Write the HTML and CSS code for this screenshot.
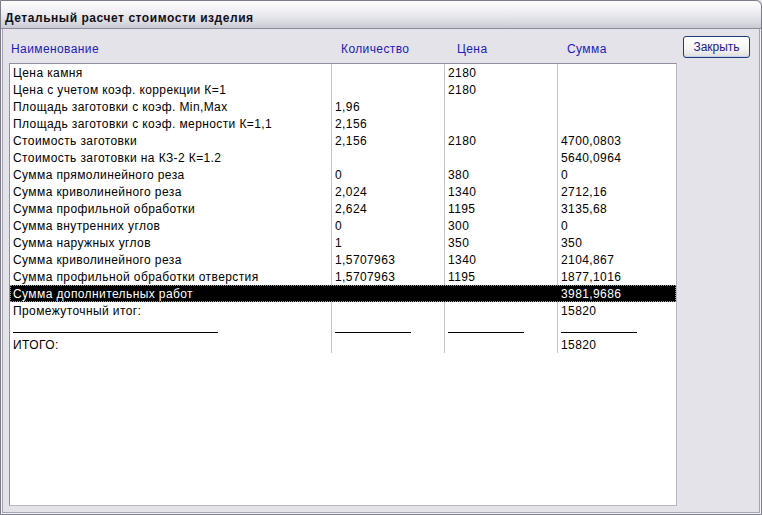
FILE: index.html
```html
<!DOCTYPE html>
<html lang="ru">
<head>
<meta charset="utf-8">
<title>Детальный расчет стоимости изделия</title>
<link rel="stylesheet" href="styles.css">
</head>
<body>
<div class="window">
  <div class="titlebar"><span class="title">Детальный расчет стоимости изделия</span></div>
  <div class="body">
    <div class="main">
      <div class="headers">
        <span class="h h1">Наименование</span>
        <span class="h h2">Количество</span>
        <span class="h h3">Цена</span>
        <span class="h h4">Сумма</span>
      </div>
      <div class="list">
        <div class="grid">
          <div class="row"><span class="c">Цена камня</span><span class="c"></span><span class="c">2180</span><span class="c"></span></div>
          <div class="row"><span class="c">Цена с учетом коэф. коррекции К=1</span><span class="c"></span><span class="c">2180</span><span class="c"></span></div>
          <div class="row"><span class="c">Площадь заготовки с коэф. Min,Max</span><span class="c">1,96</span><span class="c"></span><span class="c"></span></div>
          <div class="row"><span class="c">Площадь заготовки с коэф. мерности К=1,1</span><span class="c">2,156</span><span class="c"></span><span class="c"></span></div>
          <div class="row"><span class="c">Стоимость заготовки</span><span class="c">2,156</span><span class="c">2180</span><span class="c">4700,0803</span></div>
          <div class="row"><span class="c">Стоимость заготовки на КЗ-2 К=1.2</span><span class="c"></span><span class="c"></span><span class="c">5640,0964</span></div>
          <div class="row"><span class="c">Сумма прямолинейного реза</span><span class="c">0</span><span class="c">380</span><span class="c">0</span></div>
          <div class="row"><span class="c">Сумма криволинейного реза</span><span class="c">2,024</span><span class="c">1340</span><span class="c">2712,16</span></div>
          <div class="row"><span class="c">Сумма профильной обработки</span><span class="c">2,624</span><span class="c">1195</span><span class="c">3135,68</span></div>
          <div class="row"><span class="c">Сумма внутренних углов</span><span class="c">0</span><span class="c">300</span><span class="c">0</span></div>
          <div class="row"><span class="c">Сумма наружных углов</span><span class="c">1</span><span class="c">350</span><span class="c">350</span></div>
          <div class="row"><span class="c">Сумма криволинейного реза</span><span class="c">1,5707963</span><span class="c">1340</span><span class="c">2104,867</span></div>
          <div class="row"><span class="c">Сумма профильной обработки отверстия</span><span class="c">1,5707963</span><span class="c">1195</span><span class="c">1877,1016</span></div>
          <div class="row sel"><span class="c">Сумма дополнительных работ</span><span class="c"></span><span class="c"></span><span class="c">3981,9686</span></div>
          <div class="row"><span class="c">Промежуточный итог:</span><span class="c"></span><span class="c"></span><span class="c">15820</span></div>
          <div class="row"><span class="c"><i class="ul ul1"></i></span><span class="c"><i class="ul"></i></span><span class="c"><i class="ul"></i></span><span class="c"><i class="ul"></i></span></div>
          <div class="row"><span class="c">ИТОГО:</span><span class="c"></span><span class="c"></span><span class="c">15820</span></div>
        </div>
      </div>
    </div>
    <div class="side">
      <button class="btn">Закрыть</button>
    </div>
  </div>
</div>
</body>
</html>
```

FILE: styles.css
```css
html, body {
  margin: 0;
  padding: 0;
  background: #e4e3ea;
}
.window {
  width: 762px;
  height: 515px;
  box-sizing: border-box;
  display: flex;
  flex-direction: column;
  border: 1px solid #7c7c88;
  border-top-right-radius: 6px;
  box-shadow: inset 0 0 0 1px #f4f4f8, inset 0 0 0 2px #a4a4b0;
  background: #e4e3ea;
  font-family: "Liberation Sans", Arial, sans-serif;
  overflow: hidden;
}
.titlebar {
  height: 27px;
  flex: none;
  display: flex;
  align-items: center;
  padding-left: 4px;
  background: linear-gradient(to bottom, #fdfdfe 0%, #f1f1f5 35%, #dcdce4 75%, #c9c9d3 100%);
  border-bottom: 1px solid #8e8e9a;
  border-top-right-radius: 6px;
}
.title {
  font-weight: bold;
  font-size: 12px;
  color: #101018;
  letter-spacing: 0.55px;
  padding-top: 6px;
}
.body {
  flex: 1;
  display: flex;
  padding: 7px 0 8px 8px;
}
.main {
  width: 668px;
  flex: none;
  display: flex;
  flex-direction: column;
}
.headers {
  height: 27px;
  position: relative;
  font-size: 12px;
  letter-spacing: 0.4px;
  color: #2020b8;
}
.h { position: absolute; top: 6px; }
.h1 { left: 2px; }
.h2 { left: 332px; }
.h3 { left: 448px; }
.h4 { left: 558px; }
.list {
  flex: 1;
  background: #ffffff;
  border: 1px solid #8f8fa0;
  border-right-color: #b8b8c4;
  border-bottom-color: #b8b8c4;
}
.grid {
  display: flex;
  flex-direction: column;
}
.row {
  display: grid;
  grid-template-columns: 322px 113px 113px 1fr;
  height: 17px;
  font-size: 12px;
  letter-spacing: 0.4px;
  color: #000;
}
.c {
  box-sizing: border-box;
  border-right: 1px solid #c4c4c4;
  padding-left: 3px;
  padding-top: 1px;
  line-height: 16px;
  white-space: nowrap;
  overflow: hidden;
}
.c:last-child { border-right: none; }
.sel {
  background: #000;
  color: #fff;
  outline: 1px dotted #9a9a9a;
  outline-offset: -1px;
}
.sel .c { border-right-color: #000; }
.ul {
  display: inline-block;
  width: 76px;
  height: 12px;
  border-bottom: 1px solid #000;
  vertical-align: top;
}
.ul1 { width: 205px; }
.side {
  flex: 1;
  display: flex;
  align-items: flex-start;
  padding-left: 6px;
}
.btn {
  width: 67px;
  height: 22px;
  border: 1px solid #1c3c7c;
  border-radius: 3px;
  background: linear-gradient(to bottom, #ffffff 0%, #f4f4f0 60%, #dedee0 100%);
  box-shadow: inset 0 -1px 0 #c8d0e8, inset 0 1px 0 #ffffff;
  font-family: "Liberation Sans", Arial, sans-serif;
  font-size: 12px;
  color: #1a1a90;
  padding: 0;
}
```
